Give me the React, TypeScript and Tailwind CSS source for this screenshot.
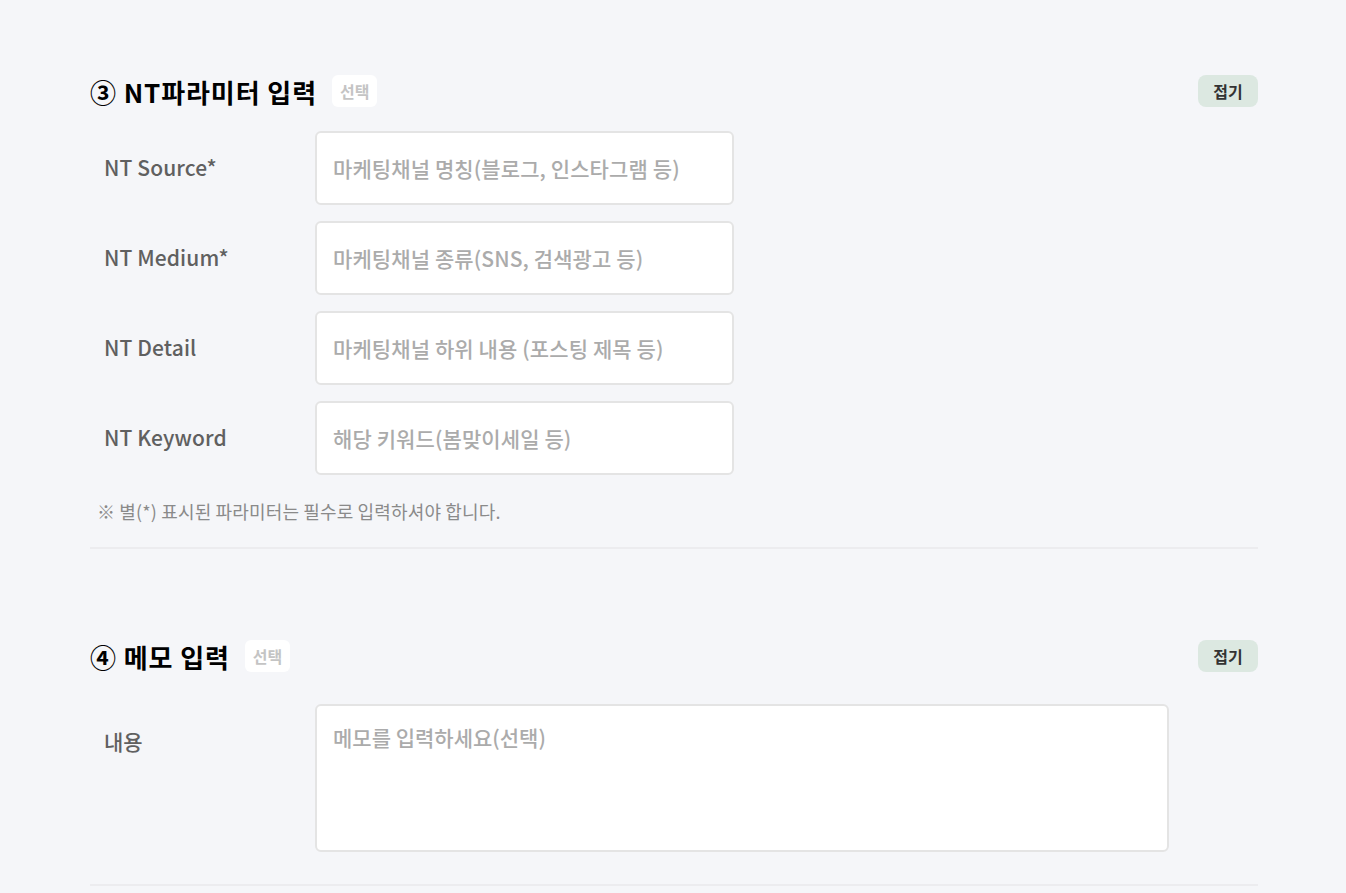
import React from "react";

const font = { fontFamily: '"Noto Sans CJK KR", "Noto Sans", sans-serif' };

const ntFields = [
  { label: "NT Source*", placeholder: "마케팅채널 명칭(블로그, 인스타그램 등)" },
  { label: "NT Medium*", placeholder: "마케팅채널 종류(SNS, 검색광고 등)" },
  { label: "NT Detail", placeholder: "마케팅채널 하위 내용 (포스팅 제목 등)" },
  { label: "NT Keyword", placeholder: "해당 키워드(봄맞이세일 등)" },
];

function SectionHeader({ title }: { title: string }) {
  return (
    <div className="flex items-center justify-between h-8">
      <div className="flex items-center gap-[15px]">
        <h2 className="text-[26px] font-bold text-black tracking-[0.9px]">{title}</h2>
        <span className="bg-white rounded-md px-2 h-8 flex items-center text-[16px] font-bold text-[#c4c4c4]">
          선택
        </span>
      </div>
      <button className="bg-[#dce8e1] rounded-lg w-[60px] h-8 text-[16px] font-bold text-[#333]">
        접기
      </button>
    </div>
  );
}

export default function App() {
  return (
    <div style={font} className="min-h-[893px] bg-[#f5f6f9] px-[90px] pt-[75px] w-[1346px]">
      <section className="w-[1168px]">
        <SectionHeader title="③ NT파라미터 입력" />
        <div className="mt-6 flex flex-col gap-4">
          {ntFields.map((f) => (
            <div key={f.label} className="flex items-center">
              <label className="w-[225px] pl-[14px] text-[21px] font-medium tracking-[0.1px] text-[#606060]">
                {f.label}
              </label>
              <input
                placeholder={f.placeholder}
                className="w-[419px] h-[74px] bg-white border-2 border-[#e4e4e4] rounded-md px-4 text-[21px] font-medium tracking-[0.1px] text-[#333] placeholder:text-[#ababab] outline-none"
              />
            </div>
          ))}
        </div>
        <p className="mt-6 pl-[7px] text-[18px] leading-6 tracking-[0.15px] text-[#8a8a8a]">
          ※ 별(*) 표시된 파라미터는 필수로 입력하셔야 합니다.
        </p>
        <div className="mt-6 border-b-2 border-[#ececef]" />
      </section>

      <section className="w-[1168px] mt-[91px]">
        <SectionHeader title="④ 메모 입력" />
        <div className="mt-8 flex items-start">
          <label className="w-[225px] pl-[14px] pt-[22px] text-[21px] font-medium text-[#606060]">내용</label>
          <textarea
            placeholder="메모를 입력하세요(선택)"
            className="w-[854px] h-[148px] bg-white border-2 border-[#e4e4e4] rounded-md px-4 py-4 text-[21px] font-medium text-[#333] placeholder:text-[#ababab] outline-none resize-none"
          />
        </div>
        <div className="mt-8 border-b-2 border-[#ececef]" />
      </section>
    </div>
  );
}
